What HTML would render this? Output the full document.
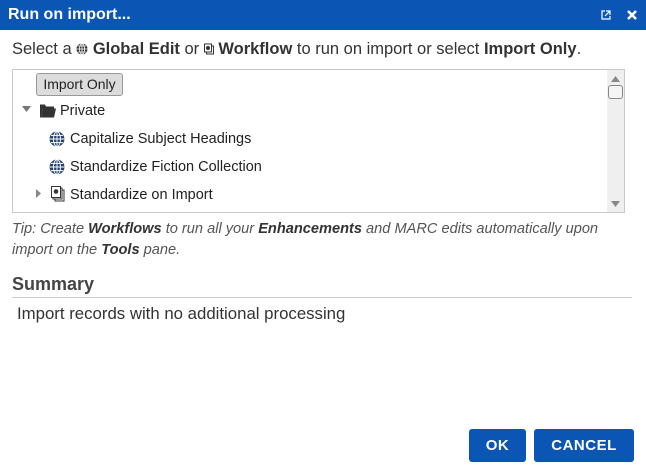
<!DOCTYPE html>
<html><head><style>
*{margin:0;padding:0;box-sizing:border-box}
body{width:646px;height:474px;background:#fff;font-family:"Liberation Sans",sans-serif;color:#333;position:relative;overflow:hidden}
.title{position:absolute;left:0;top:0;width:646px;height:30px;background:#0b56b5;color:#fff;font-weight:bold;font-size:16px;line-height:30px;padding-left:8px}
.abs{position:absolute;white-space:nowrap}
.box{position:absolute;left:12px;top:69px;width:613px;height:144px;border:1px solid #c8c8c8}
.sb{position:absolute;right:0;top:0;width:17px;height:142px;background:#efefef}
.item{position:absolute;font-size:14.5px;color:#222;white-space:nowrap}
.btn{position:absolute;top:429px;height:33px;background:#0b56b5;color:#fff;font-weight:bold;font-size:15px;line-height:33px;text-align:center;border-radius:3px;letter-spacing:.5px}
</style></head><body>
<div class="title">Run on import...</div>
<svg class="abs" style="left:601px;top:10px" width="10" height="10" viewBox="0 0 10 10"><path d="M4 1H1v8h8V6" fill="none" stroke="#fff" stroke-width="1.2"/><path d="M5 1h4v4M9 1 4 6" fill="none" stroke="#fff" stroke-width="1.2"/></svg>
<svg class="abs" style="left:627px;top:10px" width="10" height="10" viewBox="0 0 10 10"><path d="M1 1l8 8M9 1 1 9" stroke="#fff" stroke-width="2.6"/></svg>
<div class="abs" style="left:12px;top:40px;font-size:16.5px;color:#333">Select a <svg width="12" height="12" viewBox="0 0 12 12" style="vertical-align:-1px"><circle cx="6" cy="6" r="5.5" fill="#333"/><path d="M0.5 6h11M6 .5v11M2 3h8M2 9h8" stroke="#fff" stroke-width=".8"/><ellipse cx="6" cy="6" rx="2.5" ry="5.5" fill="none" stroke="#fff" stroke-width=".8"/></svg> <b>Global Edit</b> or <svg width="10" height="12" viewBox="0 0 10 11" style="vertical-align:-1px"><rect x="2.5" y="2.5" width="7" height="8" fill="#fff" stroke="#333"/><rect x=".5" y=".5" width="7" height="8" fill="#fff" stroke="#333"/><circle cx="4" cy="4.5" r="2" fill="#333"/></svg> <b>Workflow</b> to run on import or select <b>Import Only</b>.</div>
<div class="box">
 <div style="position:absolute;left:23px;top:3px;width:87px;height:23px;background:#dcdcdc;border:1px solid #999;border-radius:3px;font-size:14px;line-height:21px;text-align:center;color:#222">Import Only</div>
 <svg class="abs" style="left:9px;top:36px" width="9" height="6"><path d="M0 0h9L4.5 6z" fill="#777"/></svg>
 <svg class="abs" style="left:27px;top:33px" width="16" height="15" viewBox="0 0 16 14"><path d="M0 1h5l1 2h8v2H3L1 14H0z" fill="#333"/><path d="M3 5h13l-2 9H1z" fill="#333"/></svg>
 <div class="item" style="left:47px;top:33px">Private</div>
 <svg class="abs" style="left:36px;top:61px" width="16" height="16" viewBox="0 0 12 12"><circle cx="6" cy="6" r="5.6" fill="#26436e"/><path d="M0.5 6h11M6 .5v11M1.5 3.3h9M1.5 8.7h9" stroke="#fff" stroke-width=".7"/><ellipse cx="6" cy="6" rx="2.6" ry="5.6" fill="none" stroke="#fff" stroke-width=".7"/></svg>
 <div class="item" style="left:57px;top:61px">Capitalize Subject Headings</div>
 <svg class="abs" style="left:36px;top:89px" width="16" height="16" viewBox="0 0 12 12"><circle cx="6" cy="6" r="5.6" fill="#26436e"/><path d="M0.5 6h11M6 .5v11M1.5 3.3h9M1.5 8.7h9" stroke="#fff" stroke-width=".7"/><ellipse cx="6" cy="6" rx="2.6" ry="5.6" fill="none" stroke="#fff" stroke-width=".7"/></svg>
 <div class="item" style="left:57px;top:89px">Standardize Fiction Collection</div>
 <svg class="abs" style="left:23px;top:119px" width="5" height="9"><path d="M0 0v9l5-4.5z" fill="#888"/></svg>
 <svg class="abs" style="left:38px;top:116px" width="14" height="16" viewBox="0 0 14 16"><rect x="4" y="4" width="9" height="11" fill="#fff" stroke="#333"/><rect x="2" y="2" width="9" height="11" fill="#fff" stroke="#333"/><rect x=".5" y=".5" width="9" height="11" fill="#fff" stroke="#333"/><circle cx="5" cy="5.5" r="2.3" fill="#334"/></svg>
 <div class="item" style="left:57px;top:117px">Standardize on Import</div>
 <div class="sb">
  <svg class="abs" style="left:4px;top:6px" width="9" height="6"><path d="M0 6h9L4.5 0z" fill="#888"/></svg>
  <div style="position:absolute;left:1px;top:15px;width:15px;height:14px;border:1px solid #888;border-radius:3px;background:#f4f4f4"></div>
  <svg class="abs" style="left:4px;top:131px" width="9" height="6"><path d="M0 0h9L4.5 6z" fill="#888"/></svg>
 </div>
</div>
<div class="abs" style="left:12px;top:219px;font-size:14.6px;font-style:italic;color:#555;line-height:21px">Tip: Create <b style="color:#333">Workflows</b> to run all your <b style="color:#333">Enhancements</b> and MARC edits automatically upon<br>import on the <b style="color:#333">Tools</b> pane.</div>
<div class="abs" style="left:12px;top:274px;font-size:18px;font-weight:bold;color:#444">Summary</div>
<div style="position:absolute;left:12px;top:297px;width:620px;height:1px;background:#ccc"></div>
<div class="abs" style="left:17px;top:304px;font-size:16.8px;color:#333">Import records with no additional processing</div>
<div class="btn" style="left:469px;width:57px">OK</div>
<div class="btn" style="left:534px;width:100px">CANCEL</div>
</body></html>
